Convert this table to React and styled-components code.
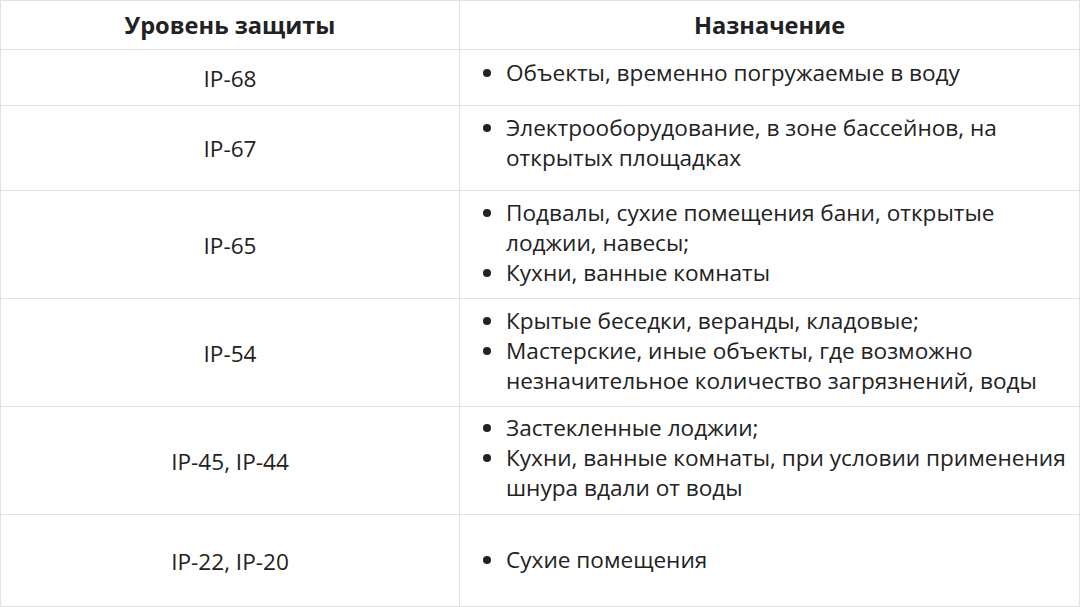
import styled, { createGlobalStyle } from 'styled-components';

const Global = createGlobalStyle`
  html, body {
    margin: 0;
    padding: 0;
    background: #fff;
  }
  body {
    font-family: "Open Sans", "Noto Sans", sans-serif;
    color: #222;
  }
`;

const rows = [
  { level: 'IP-68', h: 56, lift: 10, items: ['Объекты, временно погружаемые в воду'] },
  { level: 'IP-67', h: 85, lift: 10, items: ['Электрооборудование, в зоне бассейнов, на открытых площадках'] },
  { level: 'IP-65', h: 108, lift: 4, items: ['Подвалы, сухие помещения бани, открытые лоджии, навесы;', 'Кухни, ванные комнаты'] },
  { level: 'IP-54', h: 108, lift: 4, items: ['Крытые беседки, веранды, кладовые;', 'Мастерские, иные объекты, где возможно незначительное количество загрязнений, воды'] },
  { level: 'IP-45, IP-44', h: 108, lift: 5, items: ['Застекленные лоджии;', 'Кухни, ванные комнаты, при условии применения шнура вдали от воды'] },
  { level: 'IP-22, IP-20', h: 92, lift: 2, items: ['Сухие помещения'] },
];

export default function App() {
  return (
    <>
      <Global />
      <Table>
        <colgroup>
          <col style={{ width: 459 }} />
          <col />
        </colgroup>
        <thead>
          <tr>
            <Th>Уровень защиты</Th>
            <Th>Назначение</Th>
          </tr>
        </thead>
        <tbody>
          {rows.map((r) => (
            <tr key={r.level} style={{ height: r.h }}>
              <Level>{r.level}</Level>
              <Purpose>
                <List $lift={r.lift}>
                  {r.items.map((t) => (
                    <Item key={t}>{t}</Item>
                  ))}
                </List>
              </Purpose>
            </tr>
          ))}
        </tbody>
      </Table>
    </>
  );
}

const Table = styled.table`
  width: 1080px;
  table-layout: fixed;
  border-collapse: collapse;
  font-size: 22.6px;
  line-height: 30px;
`;

const Th = styled.th`
  height: 48px;
  padding: 0 10px;
  border: 1px solid #e2e2e2;
  font-size: 23.6px;
  font-weight: 700;
  text-align: center;
  vertical-align: middle;
`;

const Level = styled.td`
  border: 1px solid #e2e2e2;
  text-align: center;
  vertical-align: middle;
  padding: 2px 10px 0;
`;

const Purpose = styled.td`
  border: 1px solid #e2e2e2;
  vertical-align: middle;
  padding: 0 8px 0 22px;
`;

const List = styled.ul`
  margin: 0;
  padding: 0 0 ${(p) => p.$lift}px 24px;
`;

const Item = styled.li`
  line-height: 30px;
`;
